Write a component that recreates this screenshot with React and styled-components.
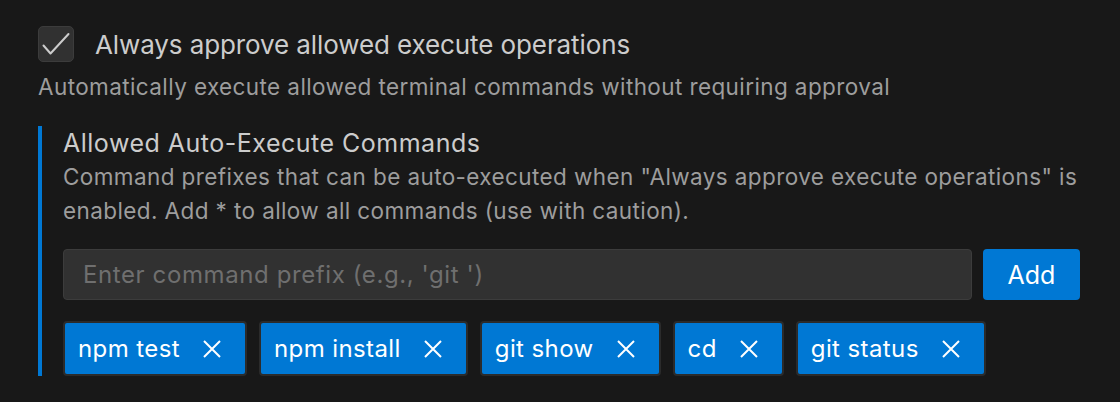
import React, { useState } from "react";
import styled, { createGlobalStyle } from "styled-components";

const GlobalStyle = createGlobalStyle`
  html, body {
    margin: 0;
    background: #181818;
  }
  body {
    font-family: Inter, "Noto Sans", sans-serif;
    color: #cccccc;
  }
`;

const Page = styled.div`
  padding: 26px 40px 0 38px;
  width: 1042px;
`;

const CheckRow = styled.label`
  display: flex;
  align-items: center;
  gap: 21px;
  cursor: pointer;
`;

const Box = styled.span`
  width: 34px;
  height: 34px;
  border: 1px solid #3c3c3c;
  border-radius: 5px;
  background: #313131;
  display: flex;
  align-items: center;
  justify-content: center;
  flex-shrink: 0;
`;

const CheckLabel = styled.span`
  font-size: 26px;
  letter-spacing: -0.1px;
  color: #cccccc;
`;

const Hint = styled.p`
  margin: 8px 0 0;
  font-size: 22.5px;
  letter-spacing: 0.4px;
  line-height: 34px;
  color: #9d9d9d;
`;

const Section = styled.section`
  margin-top: 22px;
  border-left: 4px solid #0078d4;
  padding-left: 21px;
`;

const SectionTitle = styled.h3`
  margin: 0;
  font-size: 25px;
  font-weight: 400;
  letter-spacing: 0.5px;
  line-height: 34px;
  color: #cccccc;
`;

const SectionHint = styled(Hint)`
  margin-top: 0;
`;

const InputRow = styled.div`
  display: flex;
  gap: 11px;
  margin-top: 21px;
`;

const PrefixInput = styled.input`
  flex: 1;
  height: 51px;
  box-sizing: border-box;
  background: #313131;
  border: 1px solid #3c3c3c;
  border-radius: 4px;
  padding: 0 19px;
  font-family: inherit;
  font-size: 24px;
  letter-spacing: 0.6px;
  color: #cccccc;
  outline: none;

  &::placeholder {
    color: #6f6f6f;
  }
`;

const AddButton = styled.button`
  width: 97px;
  height: 51px;
  background: #0078d4;
  border: none;
  border-radius: 4px;
  color: #ffffff;
  font-family: inherit;
  font-size: 25px;
  cursor: pointer;
`;

const TagList = styled.ul`
  list-style: none;
  margin: 21px 0 0;
  padding: 0;
  display: flex;
  flex-wrap: wrap;
  gap: 12px;
`;

const Tag = styled.li`
  display: flex;
  align-items: center;
  height: 55px;
  box-sizing: border-box;
  padding: 0 24px 0 13px;
  background: #0078d4;
  border: 2px solid #2b2b2b;
  border-radius: 4px;
  color: #ffffff;
  font-size: 24px;
  letter-spacing: 0.4px;
`;

const RemoveButton = styled.button`
  margin-left: 23px;
  padding: 0;
  border: none;
  background: none;
  display: flex;
  cursor: pointer;
`;

const CheckIcon = () => (
  <svg width="34" height="34" viewBox="0 0 34 34" fill="none">
    <path
      d="M4.5 18.5 L11.5 26.5 L29.5 7"
      stroke="#cccccc"
      strokeWidth="2"
      strokeLinecap="round"
      strokeLinejoin="round"
    />
  </svg>
);

const CloseIcon = () => (
  <svg width="18" height="18" viewBox="0 0 18 18" fill="none">
    <path d="M1 1 L17 17 M17 1 L1 17" stroke="#ffffff" strokeWidth="2" />
  </svg>
);

const initialCommands = ["npm test", "npm install", "git show", "cd", "git status"];

export default function App() {
  const [commands, setCommands] = useState(initialCommands);

  return (
    <Page>
      <GlobalStyle />
      <CheckRow>
        <Box>
          <CheckIcon />
        </Box>
        <CheckLabel>Always approve allowed execute operations</CheckLabel>
      </CheckRow>
      <Hint>Automatically execute allowed terminal commands without requiring approval</Hint>

      <Section>
        <SectionTitle>Allowed Auto-Execute Commands</SectionTitle>
        <SectionHint>
          Command prefixes that can be auto-executed when "Always approve execute operations" is
          enabled. Add * to allow all commands (use with caution).
        </SectionHint>
        <InputRow>
          <PrefixInput placeholder="Enter command prefix (e.g., 'git ')" />
          <AddButton>Add</AddButton>
        </InputRow>
        <TagList>
          {commands.map((cmd) => (
            <Tag key={cmd}>
              {cmd}
              <RemoveButton onClick={() => setCommands(commands.filter((c) => c !== cmd))}>
                <CloseIcon />
              </RemoveButton>
            </Tag>
          ))}
        </TagList>
      </Section>
    </Page>
  );
}
